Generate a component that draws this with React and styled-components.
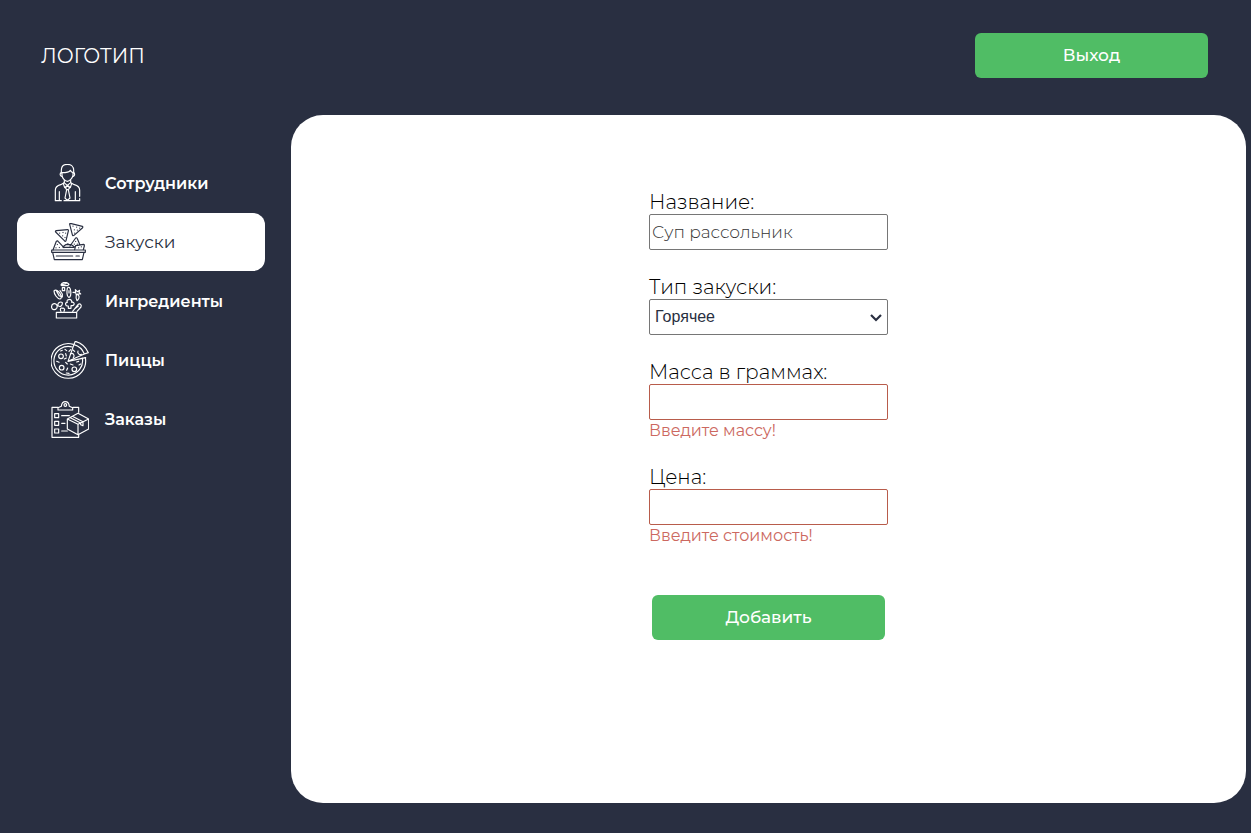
import React from "react";
import styled, { createGlobalStyle } from "styled-components";

const GlobalStyle = createGlobalStyle`
  * { box-sizing: border-box; }
  body {
    margin: 0;
    background: #292f41;
    font-family: Montserrat, Inter, "Noto Sans", sans-serif;
  }
`;

const Page = styled.div`
  min-height: 100vh;
  display: flex;
  flex-direction: column;
  padding-bottom: 30px;
`;

const Header = styled.header`
  display: flex;
  align-items: center;
  justify-content: space-between;
  padding: 33px 43px 37px 41px;
`;

const Logo = styled.a`
  color: #fff;
  font-size: 20px;
  line-height: 24px;
  text-decoration: none;
`;

const Button = styled.button`
  width: 233px;
  height: 45px;
  padding: 0 0 2px;
  border: 0;
  border-radius: 6px;
  background: #50bd65;
  color: #fff;
  font-family: inherit;
  font-size: 17px;
  font-weight: 500;
  cursor: pointer;
`;

const Content = styled.div`
  flex: 1;
  display: flex;
  gap: 26px;
  padding: 0 5px 0 17px;
`;

const Nav = styled.nav`
  flex: 0 0 248px;
  display: flex;
  flex-direction: column;
  gap: 1px;
  padding-top: 39px;
`;

const NavLink = styled.a`
  display: flex;
  align-items: center;
  gap: 16px;
  height: 58px;
  padding-left: 34px;
  border-radius: 12px;
  background: ${({ $active }) => ($active ? "#fff" : "transparent")};
  color: ${({ $active }) => ($active ? "#292f41" : "#fff")};
  font-size: ${({ $active }) => ($active ? "17px" : "16px")};
  font-weight: ${({ $active }) => ($active ? 400 : 600)};
  text-decoration: none;
`;

const IconFrame = styled.svg`
  flex: none;
  width: 38px;
  height: 38px;
  fill: none;
  stroke: currentColor;
  stroke-width: 3.5;
  stroke-linecap: round;
  stroke-linejoin: round;
`;

const Main = styled.main`
  flex: 1;
  display: flex;
  justify-content: center;
  align-items: flex-start;
  padding: 75px 20px;
  border-radius: 32px;
  background: #fff;
`;

const Form = styled.form`
  width: 239px;
  display: flex;
  flex-direction: column;
  align-items: center;
  gap: 25px;
`;

const Field = styled.div`
  width: 100%;
  display: flex;
  flex-direction: column;
`;

const Label = styled.label`
  color: #000;
  font-size: 20px;
  font-weight: 300;
  line-height: 24px;
`;

const Input = styled.input`
  width: 100%;
  height: 36px;
  padding: 1px 2px;
  border: 1px solid ${({ $invalid }) => ($invalid ? "#b85c4b" : "#767676")};
  border-radius: 2px;
  background: #fff;
  font-family: inherit;
  font-size: 17px;
  font-weight: 300;
  &::placeholder { color: #333; }
`;

const SelectBox = styled.div`
  position: relative;
`;

const Select = styled.select`
  appearance: none;
  display: block;
  width: 100%;
  height: 36px;
  padding: 0 24px 2px 5px;
  border: 1px solid #767676;
  border-radius: 2px;
  background: #fff;
  color: #292f41;
  font-family: "Liberation Sans", Arial, sans-serif;
  font-size: 16px;
`;

const SelectArrow = styled.svg`
  position: absolute;
  right: 6px;
  top: 15px;
  width: 12px;
  height: 8px;
  fill: none;
  stroke: #292f41;
  stroke-width: 2.2;
  pointer-events: none;
`;

const ErrorText = styled.span`
  padding-top: 1px;
  color: #cc6860;
  font-size: 16px;
  font-weight: 400;
  line-height: 19px;
`;

const Actions = styled.div`
  padding-top: 25px;
`;

const EmployeeIcon = () => (
  <IconFrame viewBox="33 24 114 114" aria-hidden="true">
    <path d="M64 50V43C64 31 71 25 82 25S101 32 101 43V50" />
    <path d="M66 50C75 50 88 48 91 43C94 48 97 49 99 50" />
    <path d="M66 50V58C67 67 75 76 82 76S97 67 99 58V50M64 50C59 51 59 60 65 61M101 50C105 51 105 60 100 61" />
    <path d="M73 73V80L62 86C50 89 46 94 46 103V134H64M92 73V80L103 86C115 89 119 94 119 103V121M119 128V134H72" />
    <path d="M72 80L82 88L92 80M70 83L74 95L81 89M95 83L91 95L84 89M79 91H86L88 97L85 101H80L77 97ZM80 101L75 126L82 133L90 126L85 101M58 107V133M106 107V133" />
  </IconFrame>
);

const SnackIcon = () => (
  <IconFrame viewBox="33 33 114 114" aria-hidden="true">
    <path d="M91 34L127 43Q130 45 127 48L102 70Q98 73 97 68L89 37Q89 34 91 34ZM49 56L83 53Q86 53 85 57L78 86Q76 90 73 86L47 60Q45 57 49 56Z" />
    <path d="M35 114H136V121H35ZM38 121L43 143H127L132 121M49 132H98M108 132H118" />
    <path d="M39 114L49 88Q52 85 55 89L72 107M90 102L107 78Q110 76 112 80L119 97M68 105L77 98H94L104 105M70 106H102M104 113L107 101L131 97Q134 98 133 102L130 113M78 98L84 95" />
    <path strokeWidth="3" d="M99 42V43M110 45V46M119 48V49M103 53V54M112 54V55M104 63V64M59 63V64M69 61V62M77 63V64M68 71V72M75 76V77M52 97V98M48 107V108M58 106V107M107 88V89M103 96V97M112 96V97M116 107V108M124 104V105" />
  </IconFrame>
);

const IngredientIcon = () => (
  <IconFrame viewBox="33 30 114 114" aria-hidden="true">
    <path d="M49 121H110V138H49Z" />
    <path d="M63 39C66 29 81 29 87 37L83 41H66ZM66 38L78 35" />
    <path d="M42 57C48 50 57 59 61 66C66 75 64 81 59 81C53 80 42 68 42 57ZM50 58L57 70M57 71L67 75V66L60 56" />
    <path d="M67 47H74V56H67ZM82 49C86 42 91 47 92 56C94 67 91 77 86 76C80 73 80 58 82 49ZM87 56V63" />
    <path d="M99 61L107 60L106 53L112 59L119 55L117 61L122 66L113 66L109 69L107 62ZM109 67L115 69C120 74 116 84 111 86C107 80 108 72 109 67Z" />
    <path d="M42 95C49 94 54 101 50 109C45 115 36 114 35 107C34 101 37 96 42 95ZM54 101C52 93 61 87 67 92C68 101 61 107 54 101Z" />
    <path d="M86 83C91 80 97 86 95 91C104 88 105 100 97 101H93V109H85V102C75 103 74 91 82 91C80 87 81 84 86 83Z" />
    <path d="M98 118L114 98C119 93 126 98 123 105L111 118M106 109L115 102M63 118C58 111 63 106 67 109C70 107 77 111 72 118" />
  </IconFrame>
);

const PizzaIcon = () => (
  <IconFrame viewBox="33 30 114 114" aria-hidden="true">
    <path d="M100 40A52 52 0 1 0 136 80M97 48A43 43 0 1 0 127 81" />
    <path d="M84 91L101 43L106 31C124 36 138 49 145 65L133 69ZM102 41C116 45 127 54 133 69M84 91L137 80" />
    <circle cx="63" cy="76" r="7" />
    <circle cx="65" cy="110" r="7" />
    <circle cx="103" cy="115" r="7" />
    <path d="M91 69C99 64 106 73 100 80M114 60C111 67 118 73 125 70M99 57L104 61M92 56L87 61M80 59L75 55M77 68L79 75M73 84L79 81M50 91L57 94M77 94L82 99M91 99L99 102M83 111L80 118M79 126L87 127M110 93L116 91M117 102L122 99M62 60L67 58" />
  </IconFrame>
);

const OrderIcon = () => (
  <IconFrame viewBox="33 30 114 114" aria-hidden="true">
    <path d="M54 52H36V142H116V134M99 52H116V67M54 60V53L64 49C65 40 69 35 76 35S87 40 88 49L98 53V60Z" />
    <circle cx="76" cy="45" r="4" />
    <path d="M44 71H56V83H44ZM44 94H56V106H44ZM44 117H56V129H44ZM65 77H88M65 100H75M65 123H82" />
    <path d="M82 87L114 70L146 87V117L114 134L82 117ZM82 87L114 103L146 87M114 103V134M97 79L129 95V107L122 104V99L91 83" />
  </IconFrame>
);

const sections = [
  { title: "Сотрудники", Icon: EmployeeIcon },
  { title: "Закуски", Icon: SnackIcon, active: true },
  { title: "Ингредиенты", Icon: IngredientIcon },
  { title: "Пиццы", Icon: PizzaIcon },
  { title: "Заказы", Icon: OrderIcon },
];

export default function App() {
  return (
    <Page>
      <GlobalStyle />
      <Header>
        <Logo href="#">ЛОГОТИП</Logo>
        <Button type="button">Выход</Button>
      </Header>
      <Content>
        <Nav>
          {sections.map(({ title, Icon, active }) => (
            <NavLink
              key={title}
              href="#"
              $active={active}
              aria-current={active ? "page" : undefined}
            >
              <Icon />
              {title}
            </NavLink>
          ))}
        </Nav>
        <Main>
          <Form noValidate onSubmit={(e) => e.preventDefault()}>
            <Field>
              <Label htmlFor="name">Название:</Label>
              <Input id="name" type="text" placeholder="Суп рассольник" />
            </Field>
            <Field>
              <Label htmlFor="kind">Тип закуски:</Label>
              <SelectBox>
                <Select id="kind">
                  <option>Горячее</option>
                </Select>
                <SelectArrow viewBox="0 0 12 8" aria-hidden="true">
                  <path d="M1 1L6 6L11 1" />
                </SelectArrow>
              </SelectBox>
            </Field>
            <Field>
              <Label htmlFor="mass">Масса в граммах:</Label>
              <Input id="mass" type="text" $invalid aria-invalid="true" aria-describedby="mass-error" />
              <ErrorText id="mass-error">Введите массу!</ErrorText>
            </Field>
            <Field>
              <Label htmlFor="price">Цена:</Label>
              <Input id="price" type="text" $invalid aria-invalid="true" aria-describedby="price-error" />
              <ErrorText id="price-error">Введите стоимость!</ErrorText>
            </Field>
            <Actions>
              <Button type="submit">Добавить</Button>
            </Actions>
          </Form>
        </Main>
      </Content>
    </Page>
  );
}
